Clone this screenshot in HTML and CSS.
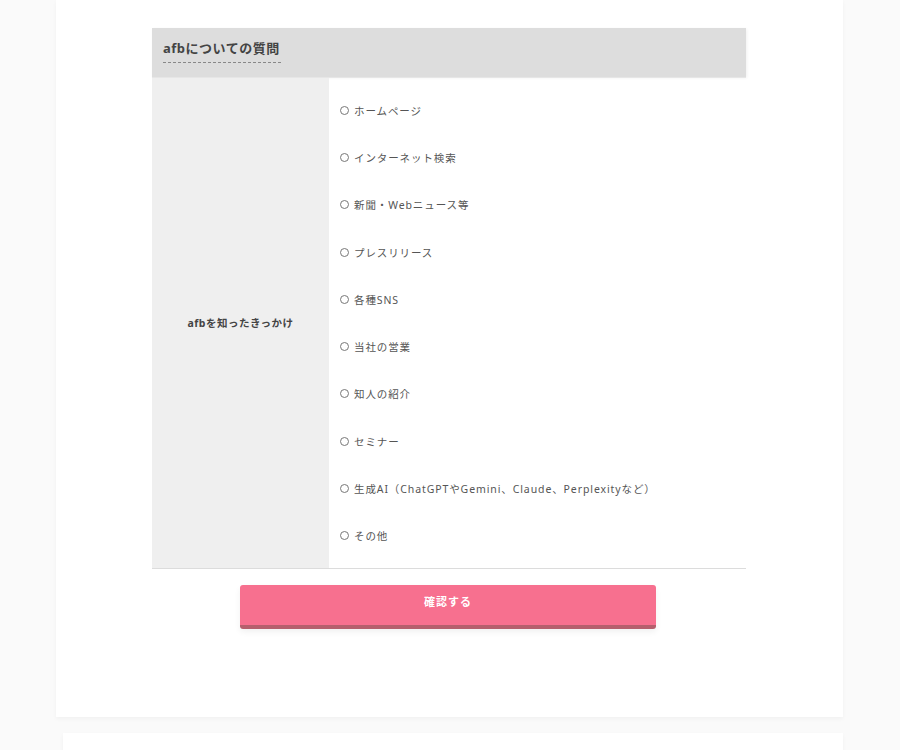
FILE: index.html
```html
<!DOCTYPE html>
<html lang="ja">
<head>
<meta charset="utf-8">
<title>afbについての質問</title>
<link rel="stylesheet" href="styles.css">
</head>
<body>
<main class="card">
  <form class="form">
    <table class="qtable">
      <colgroup>
        <col class="col-label">
        <col class="col-opts">
      </colgroup>
      <thead>
        <tr>
          <th colspan="2" class="qhead"><span class="qtitle">afbについての質問</span></th>
        </tr>
      </thead>
      <tbody>
        <tr>
          <th class="qlabel">afbを知ったきっかけ</th>
          <td class="qopts">
            <label class="opt"><span class="radio"></span>ホームページ</label>
            <label class="opt"><span class="radio"></span>インターネット検索</label>
            <label class="opt"><span class="radio"></span>新聞・Webニュース等</label>
            <label class="opt"><span class="radio"></span>プレスリリース</label>
            <label class="opt"><span class="radio"></span>各種SNS</label>
            <label class="opt"><span class="radio"></span>当社の営業</label>
            <label class="opt"><span class="radio"></span>知人の紹介</label>
            <label class="opt"><span class="radio"></span>セミナー</label>
            <label class="opt"><span class="radio"></span>生成AI（ChatGPTやGemini、Claude、Perplexityなど）</label>
            <label class="opt"><span class="radio"></span>その他</label>
          </td>
        </tr>
      </tbody>
    </table>
    <div class="actions">
      <button type="button" class="submit">確認する</button>
    </div>
  </form>
</main>
<div class="card card-next"></div>
</body>
</html>
```

FILE: styles.css
```css
html, body {
  margin: 0;
  padding: 0;
}
body {
  background: #fafafa;
  font-family: "Noto Sans", "Noto Sans CJK JP", sans-serif;
  color: #444;
}
.card {
  box-sizing: border-box;
  width: 787px;
  margin: 0 0 0 56px;
  background: #fff;
  padding: 28px 0 88px;
  box-shadow: 0 2px 4px rgba(0, 0, 0, 0.04);
}
.card-next {
  margin-top: 16px;
  margin-left: 63px;
  width: 780px;
  height: 40px;
  padding: 0;
}
.form {
  width: 594px;
  margin: 0 0 0 96px;
}
.qtable {
  width: 594px;
  border-collapse: collapse;
  table-layout: fixed;
}
.col-label {
  width: 177px;
}
.qhead {
  background: #dddddd;
  text-align: left;
  vertical-align: top;
  height: 49px;
  padding: 8px 11px 0;
  box-sizing: border-box;
  border-bottom: 1px solid #e6e6e6;
  box-shadow: 1px 1px 3px rgba(0, 0, 0, 0.06);
}
.qtitle {
  display: inline-block;
  font-size: 13px;
  font-weight: 700;
  letter-spacing: 0.5px;
  line-height: 16px;
  padding: 2px 1px 6px 0;
  border-bottom: 1px dashed #888;
  color: #444;
}
.qlabel {
  background: #efefef;
  font-size: 10.5px;
  font-weight: 700;
  letter-spacing: 0.5px;
  color: #444;
  text-align: center;
  vertical-align: middle;
  padding: 0;
}
.qopts {
  padding: 9px 11px 9px;
  vertical-align: top;
}
.opt {
  display: flex;
  align-items: center;
  height: 47.3px;
  font-size: 10.5px;
  letter-spacing: 0.9px;
  color: #555;
  white-space: nowrap;
}
.radio {
  display: inline-block;
  width: 7px;
  height: 7px;
  border: 1px solid #777;
  border-radius: 50%;
  margin: 0 5px 0 0;
  flex: none;
}
.qtable tbody tr {
  border-bottom: 1px solid #dcdcdc;
}
.actions {
  display: flex;
  justify-content: center;
  padding-top: 16px;
}
.submit {
  width: 416px;
  height: 44px;
  margin-left: -2px;
  border: none;
  border-radius: 3px;
  background: #f7708f;
  border-bottom: 4px solid #b55f6d;
  color: #fff;
  font-family: inherit;
  font-size: 11px;
  font-weight: 700;
  letter-spacing: 1px;
  padding: 0 0 8px;
  box-shadow: 0 3px 6px rgba(0, 0, 0, 0.06);
}
```
